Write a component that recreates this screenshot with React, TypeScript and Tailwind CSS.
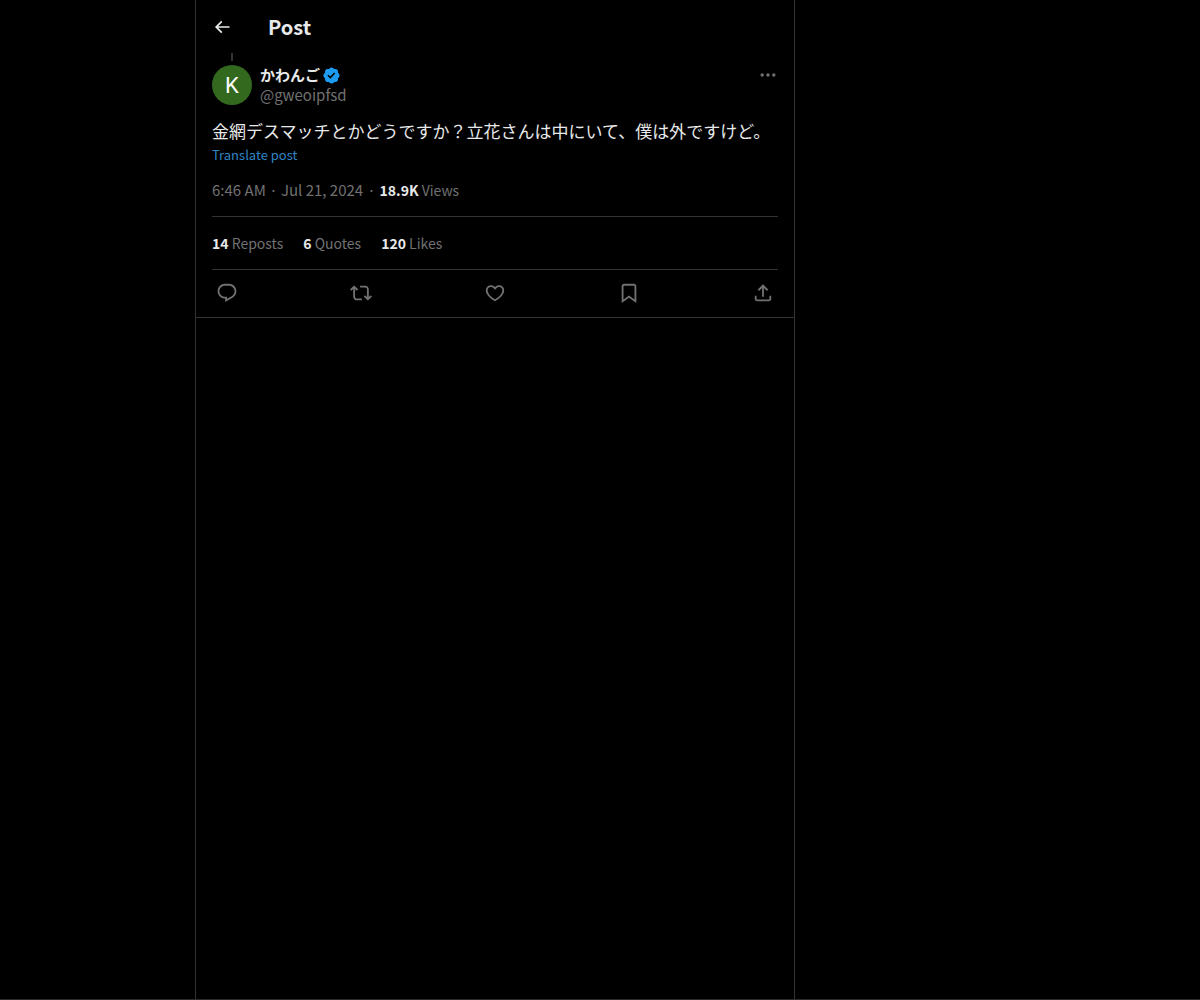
type IconProps = {
	path: string;
	className?: string;
};

const icons = {
	back: 'M7.414 13l5.043 5.04-1.414 1.42L3.586 12l7.457-7.46 1.414 1.42L7.414 11H21v2H7.414z',
	more: 'M3 12c0-1.1.9-2 2-2s2 .9 2 2-.9 2-2 2-2-.9-2-2zm9 2c1.1 0 2-.9 2-2s-.9-2-2-2-2 .9-2 2 .9 2 2 2zm7 0c1.1 0 2-.9 2-2s-.9-2-2-2-2 .9-2 2 .9 2 2 2z',
	verified:
		'M20.396 11c-.018-.646-.215-1.275-.57-1.816-.354-.54-.852-.972-1.438-1.246.223-.607.27-1.264.14-1.897-.131-.634-.437-1.218-.882-1.687-.47-.445-1.053-.75-1.687-.882-.633-.13-1.29-.083-1.897.14-.273-.587-.704-1.086-1.245-1.44S11.647 1.62 11 1.604c-.646.017-1.273.213-1.813.568s-.969.854-1.24 1.44c-.608-.223-1.267-.272-1.902-.14-.635.13-1.22.436-1.69.882-.445.47-.749 1.055-.878 1.688-.13.633-.08 1.29.144 1.896-.587.274-1.087.705-1.443 1.245-.356.54-.555 1.17-.574 1.817.02.647.218 1.276.574 1.817.356.54.856.972 1.443 1.245-.224.606-.274 1.263-.144 1.896.13.634.433 1.218.877 1.688.47.443 1.054.747 1.687.878.633.132 1.29.084 1.897-.136.274.586.705 1.084 1.246 1.439.54.354 1.17.551 1.816.569.647-.016 1.276-.213 1.817-.567s.972-.854 1.245-1.44c.604.239 1.266.296 1.903.164.636-.132 1.22-.447 1.68-.907.46-.46.776-1.044.908-1.681s.075-1.299-.165-1.903c.586-.274 1.084-.705 1.439-1.246.354-.54.551-1.17.569-1.816z',
	reply: 'M1.751 10c0-4.42 3.584-8 8.005-8h4.366c4.49 0 8.129 3.64 8.129 8.13 0 2.96-1.607 5.68-4.196 7.11l-8.054 4.46v-3.69h-.067c-4.49.1-8.183-3.51-8.183-8.01zm8.005-6c-3.317 0-6.005 2.69-6.005 6 0 3.37 2.77 6.08 6.138 6.01l.351-.01h1.761v2.3l5.087-2.81c1.951-1.08 3.163-3.13 3.163-5.36 0-3.39-2.744-6.13-6.129-6.13H9.756z',
	repost: 'M4.5 3.88l4.432 4.14-1.364 1.46L5.5 7.55V16c0 1.1.896 2 2 2H13v2H7.5c-2.209 0-4-1.79-4-4V7.55L1.432 9.48.068 8.02 4.5 3.88zM16.5 6H11V4h5.5c2.209 0 4 1.79 4 4v8.45l2.068-1.93 1.364 1.46-4.432 4.14-4.432-4.14 1.364-1.46 2.068 1.93V8c0-1.1-.896-2-2-2z',
	like: 'M16.697 5.5c-1.222-.06-2.679.51-3.89 2.16l-.805 1.09-.806-1.09C9.984 6.01 8.526 5.44 7.304 5.5c-1.243.07-2.349.78-2.91 1.91-.552 1.12-.633 2.78.479 4.82 1.074 1.97 3.257 4.27 7.129 6.61 3.87-2.34 6.052-4.64 7.126-6.61 1.111-2.04 1.03-3.7.477-4.82-.561-1.13-1.666-1.84-2.908-1.91zm4.187 7.69c-1.351 2.48-4.001 5.12-8.379 7.67l-.503.3-.504-.3c-4.379-2.55-7.029-5.19-8.382-7.67-1.36-2.5-1.41-4.86-.514-6.67.887-1.79 2.647-2.91 4.601-3.01 1.651-.09 3.368.56 4.798 2.01 1.429-1.45 3.146-2.1 4.796-2.01 1.954.1 3.714 1.22 4.601 3.01.896 1.81.846 4.17-.514 6.67z',
	bookmark:
		'M4 4.5C4 3.12 5.119 2 6.5 2h11C18.881 2 20 3.12 20 4.5v18.44l-8-5.71-8 5.71V4.5zM6.5 4c-.276 0-.5.22-.5.5v14.56l6-4.29 6 4.29V4.5c0-.28-.224-.5-.5-.5h-11z',
	share: 'M12 2.59l5.7 5.7-1.41 1.42L13 6.41V16h-2V6.41l-3.3 3.3-1.41-1.42L12 2.59zM21 15l-.02 3.51c0 1.38-1.12 2.49-2.5 2.49H5.5C4.11 21 3 19.88 3 18.5V15h2v3.5c0 .28.22.5.5.5h12.98c.28 0 .5-.22.5-.5L19 15h2z',
};

const stats = [
	{ count: '14', label: 'Reposts' },
	{ count: '6', label: 'Quotes' },
	{ count: '120', label: 'Likes' },
];

const actions = [
	{ label: 'Reply', path: icons.reply },
	{ label: 'Repost', path: icons.repost },
	{ label: 'Like', path: icons.like },
	{ label: 'Bookmark', path: icons.bookmark },
	{ label: 'Share post', path: icons.share },
];

function Icon({ path, className }: IconProps) {
	return (
		<svg viewBox="0 0 24 24" fill="currentColor" aria-hidden="true" className={className}>
			<path d={path} />
		</svg>
	);
}

export default function App() {
	return (
		<div className="flex min-h-screen border-b border-[#2f2a2c] bg-black pl-[195px] font-['Noto_Sans_CJK_JP',sans-serif] text-[15px] leading-5 text-[#717171]">
			<main className="w-full max-w-[600px] border-x border-[#333333]">
				<header className="flex h-[53px] items-center gap-9 px-4 text-[#e7e9ea]">
					<button type="button" aria-label="Back">
						<Icon path={icons.back} className="size-5" />
					</button>
					<h1 className="text-xl font-bold">Post</h1>
				</header>

				<article className="border-b border-[#333333] px-4">
					{/* thread line down to the avatar */}
					<div className="flex h-3 w-10 justify-center">
						<div className="h-2 w-0.5 bg-[#333333]" />
					</div>

					<div className="flex items-start gap-2">
						<a
							href="#profile"
							aria-label="かわんご"
							className="flex size-10 items-center justify-center rounded-full bg-[#33691e] pt-0.5 font-[Roboto,sans-serif] text-[22px] text-white"
						>
							K
						</a>
						<div className="flex-1">
							<div className="flex items-center gap-0.5">
								<a href="#profile" className="font-bold text-[#e7e9ea]">
									かわんご
								</a>
								<svg viewBox="0 0 22 22" role="img" aria-label="Verified account" className="size-[19px]">
									<path fill="#1d9bf0" d={icons.verified} />
									<path fill="#000000" d="M9.662 14.85l-3.429-3.428 1.293-1.302 2.072 2.072 4.4-4.794 1.347 1.246z" />
								</svg>
							</div>
							<a href="#profile" className="block">
								@gweoipfsd
							</a>
						</div>
						<button type="button" aria-label="More" className="h-5">
							<Icon path={icons.more} className="size-5" />
						</button>
					</div>

					<p className="mt-3.5 text-[17px] leading-6 text-[#e7e9ea]">
						金網デスマッチとかどうですか？立花さんは中にいて、僕は外ですけど。
					</p>
					<button type="button" className="mt-0.5 block text-[13px] leading-5 text-[#3185c5]">
						Translate post
					</button>

					<div className="flex gap-1 border-b border-[#333333] pt-[15px] pb-4">
						<a href="#post">6:46 AM · Jul 21, 2024</a>
						<span>·</span>
						<span className="text-sm">
							<span className="font-bold text-[#e7e9ea]">18.9K</span> Views
						</span>
					</div>

					<div className="flex gap-5 border-b border-[#333333] py-4 text-sm">
						{stats.map((stat) => (
							<a key={stat.label} href="#post">
								<span className="font-bold text-[#e7e9ea]">{stat.count}</span> {stat.label}
							</a>
						))}
					</div>

					<div className="flex h-[47px] items-center justify-between px-1 pb-px">
						{actions.map((action) => (
							<button key={action.label} type="button" aria-label={action.label}>
								<Icon path={action.path} className="size-[22px]" />
							</button>
						))}
					</div>
				</article>
			</main>
		</div>
	);
}
